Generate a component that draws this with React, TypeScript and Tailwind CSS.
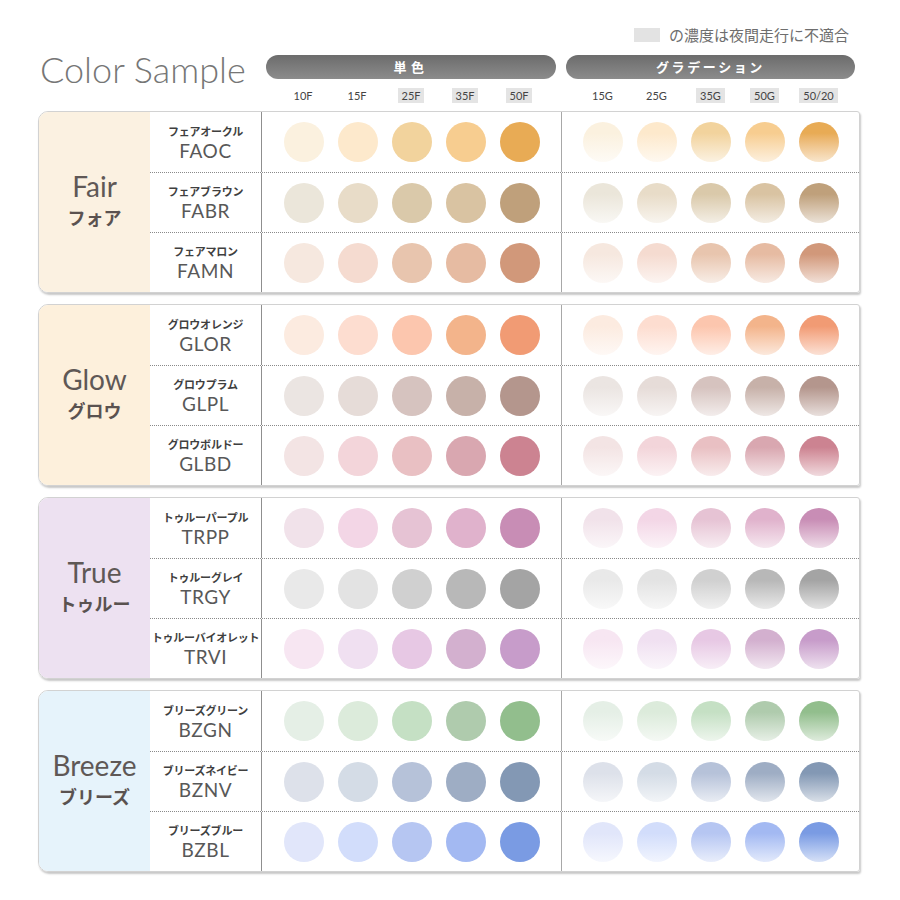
const singleLabels = [
  { t: "10F", hl: false },
  { t: "15F", hl: false },
  { t: "25F", hl: true },
  { t: "35F", hl: true },
  { t: "50F", hl: true },
];

const gradLabels = [
  { t: "15G", hl: false },
  { t: "25G", hl: false },
  { t: "35G", hl: true },
  { t: "50G", hl: true },
  { t: "50/20", hl: true },
];

const groups = [
  {
    en: "Fair",
    ja: "フォア",
    bg: "bg-[#fbf1e1]",
    rows: [
      { ja: "フェアオークル", code: "FAOC", colors: ["#fbf1df", "#fde9cc", "#f2d39d", "#f7cd90", "#e8ab55"] },
      { ja: "フェアブラウン", code: "FABR", colors: ["#ebe6da", "#e8dcc8", "#dac9aa", "#d9c3a2", "#bfa07b"] },
      { ja: "フェアマロン", code: "FAMN", colors: ["#f6e8df", "#f5dbd0", "#e8c5ae", "#e6bba2", "#d1987a"] },
    ],
  },
  {
    en: "Glow",
    ja: "グロウ",
    bg: "bg-[#fdf0dc]",
    rows: [
      { ja: "グロウオレンジ", code: "GLOR", colors: ["#fcebe0", "#fdddd0", "#fcc6ae", "#f3b48b", "#f19b74"] },
      { ja: "グロウプラム", code: "GLPL", colors: ["#ebe5e2", "#e6dcd8", "#d6c3bf", "#c7b1a9", "#b4968d"] },
      { ja: "グロウボルドー", code: "GLBD", colors: ["#f3e4e4", "#f3d5da", "#e9c0c3", "#d9a7b0", "#cc8391"] },
    ],
  },
  {
    en: "True",
    ja: "トゥルー",
    bg: "bg-[#ede1f1]",
    rows: [
      { ja: "トゥルーパープル", code: "TRPP", colors: ["#f1e2ea", "#f3d6e6", "#e6c3d4", "#e0b2cc", "#c88db5"] },
      { ja: "トゥルーグレイ", code: "TRGY", colors: ["#e9e9e9", "#e3e3e3", "#d0d0d0", "#b8b8b8", "#a4a4a4"] },
      { ja: "トゥルーバイオレット", code: "TRVI", colors: ["#f7e6f2", "#f0e0f1", "#e7c8e4", "#d3b0cf", "#c79cca"] },
    ],
  },
  {
    en: "Breeze",
    ja: "ブリーズ",
    bg: "bg-[#e6f3fb]",
    rows: [
      { ja: "ブリーズグリーン", code: "BZGN", colors: ["#e5efe6", "#dcebdb", "#c5e0c4", "#afcbad", "#92be8d"] },
      { ja: "ブリーズネイビー", code: "BZNV", colors: ["#dde1ea", "#d4dce6", "#b6c2d9", "#9eadc4", "#8398b4"] },
      { ja: "ブリーズブルー", code: "BZBL", colors: ["#e1e6fa", "#d2ddfb", "#b6c6f2", "#a3b9f2", "#7a9be3"] },
    ],
  },
];

const latin = "font-['Lato','Liberation_Sans',sans-serif]";
const jp = "font-['Noto_Sans_CJK_JP','Noto_Sans',sans-serif]";

function Labels({ items }: { items: { t: string; hl: boolean }[] }) {
  return (
    <div className="flex justify-center gap-[14px] mt-[9px] h-[15px]">
      {items.map((l) => (
        <div key={l.t} className="w-[40px] flex justify-center">
          <span
            className={`${latin} text-[11px] leading-[15px] text-[#444] px-[4px] ${l.hl ? "bg-[#e4e4e4]" : ""}`}
          >
            {l.t}
          </span>
        </div>
      ))}
    </div>
  );
}

function Pill({ text, wide }: { text: string; wide?: boolean }) {
  return (
    <div className="mx-[5px] h-[24px] rounded-full bg-gradient-to-b from-[#6c6c6c] to-[#8c8c8c] flex items-center justify-center">
      <span
        className={`${jp} text-white font-bold text-[13px] ${wide ? "tracking-[0.35em]" : "tracking-[0.2em]"}`}
      >
        {text}
      </span>
    </div>
  );
}

export default function App() {
  return (
    <div className="w-[900px] h-[900px] bg-white overflow-hidden">
      <div className="ml-[38px] w-[822px]">
        {/* Legend */}
        <div className="h-[51px] flex justify-end items-start pt-[27px] pr-[11px]">
          <div className="w-[26px] h-[14px] bg-[#e3e3e3] mt-[1px] mr-[9px]" />
          <span className={`${jp} text-[15px] leading-[16px] text-[#6e6e6e]`}>の濃度は夜間走行に不適合</span>
        </div>

        {/* Header */}
        <div className="flex h-[52px] mb-[8px]">
          <div className="w-[223px] pl-[2px]">
            <h1 className={`${latin} font-light text-[36px] leading-none text-[#767676] whitespace-nowrap`}>
              Color Sample
            </h1>
          </div>
          <div className="w-[300px] pt-[4px]">
            <Pill text="単色" wide />
            <Labels items={singleLabels} />
          </div>
          <div className="w-[299px] pt-[4px]">
            <Pill text="グラデーション" />
            <Labels items={gradLabels} />
          </div>
        </div>

        {/* Groups */}
        <div className="flex flex-col gap-[11px]">
          {groups.map((g) => (
            <div
              key={g.en}
              className="flex border border-[#d2d2d2] rounded-l-[10px] rounded-r-[3px] overflow-hidden shadow-[1px_2px_2px_rgba(0,0,0,0.22)]"
            >
              <div className={`w-[111px] ${g.bg} flex flex-col items-center justify-center pb-[4px]`}>
                <span className={`${latin} text-[28px] leading-[34px] text-[#5f5856]`}>{g.en}</span>
                <span className={`${jp} font-bold text-[18px] leading-[28px] text-[#5a5250]`}>{g.ja}</span>
              </div>
              <div className="flex-1 flex flex-col">
                {g.rows.map((r, i) => (
                  <div
                    key={r.code}
                    className={`flex h-[60px] ${i > 0 ? "border-t border-dotted border-[#8a8a8a]" : ""}`}
                  >
                    <div className="w-[111px] flex flex-col items-center justify-center">
                      <span className={`${jp} font-bold text-[11px] leading-[16px] text-[#3f3f3f] whitespace-nowrap tracking-[-0.02em]`}>
                        {r.ja}
                      </span>
                      <span className={`${latin} text-[19px] leading-[23px] text-[#585858] tracking-[0.03em]`}>
                        {r.code}
                      </span>
                    </div>
                    <div className="w-[1px] bg-[#8f8f8f]" />
                    <div className="w-[299px] flex items-center justify-center gap-[14px]">
                      {r.colors.map((c) => (
                        <div key={c} className="w-[40px] h-[40px] rounded-full" style={{ backgroundColor: c }} />
                      ))}
                    </div>
                    <div className="w-[1px] bg-[#a8a8a8]" />
                    <div className="flex-1 flex items-center justify-center gap-[14px]">
                      {r.colors.map((c) => (
                        <div
                          key={c}
                          className="w-[40px] h-[40px] rounded-full"
                          style={{
                            background: `linear-gradient(to bottom, ${c} 0%, ${c} 28%, color-mix(in srgb, ${c} 30%, white) 100%)`,
                          }}
                        />
                      ))}
                    </div>
                  </div>
                ))}
              </div>
            </div>
          ))}
        </div>
      </div>
    </div>
  );
}
